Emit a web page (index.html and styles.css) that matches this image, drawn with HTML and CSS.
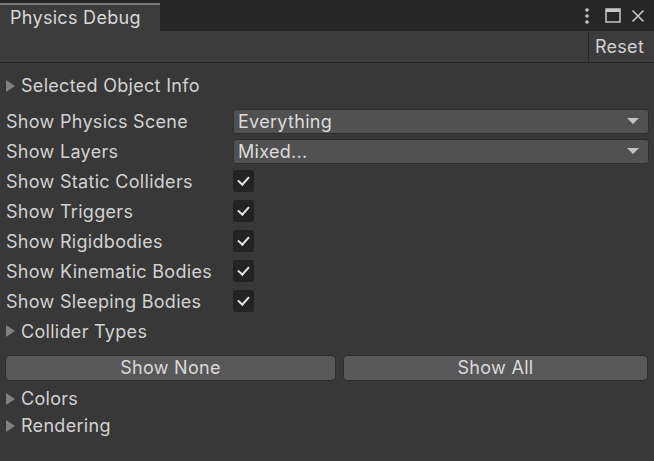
FILE: index.html
```html
<!DOCTYPE html>
<html>
<head>
<meta charset="utf-8">
<link rel="stylesheet" href="styles.css">
</head>
<body>
<div class="window">
  <div class="tabbar">
    <div class="tab">Physics Debug</div>
    <div class="tab-icons">
      <svg class="ic" width="8" height="18" viewBox="0 0 8 18"><circle cx="4" cy="3" r="1.8" fill="#c8c8c8"/><circle cx="4" cy="9" r="1.8" fill="#c8c8c8"/><circle cx="4" cy="15" r="1.8" fill="#c8c8c8"/></svg>
      <svg class="ic" width="16" height="15" viewBox="0 0 16 15"><rect x="1" y="1" width="14" height="13" fill="none" stroke="#c8c8c8" stroke-width="1.5"/><rect x="1" y="1" width="14" height="3" fill="#c8c8c8"/></svg>
      <svg class="ic" width="14" height="14" viewBox="0 0 14 14"><path d="M1.5 1.5L12.5 12.5M12.5 1.5L1.5 12.5" stroke="#c8c8c8" stroke-width="1.6"/></svg>
    </div>
  </div>
  <div class="toolbar">
    <div class="toolbar-btn">Reset</div>
  </div>
  <div class="content">
    <div class="foldout first"><span class="arrow"></span>Selected Object Info</div>
    <div class="field"><span class="label">Show Physics Scene</span><div class="popup">Everything<span class="caret"></span></div></div>
    <div class="field"><span class="label">Show Layers</span><div class="popup">Mixed...<span class="caret"></span></div></div>
    <div class="field"><span class="label">Show Static Colliders</span><span class="check"></span></div>
    <div class="field"><span class="label">Show Triggers</span><span class="check"></span></div>
    <div class="field"><span class="label">Show Rigidbodies</span><span class="check"></span></div>
    <div class="field"><span class="label">Show Kinematic Bodies</span><span class="check"></span></div>
    <div class="field"><span class="label">Show Sleeping Bodies</span><span class="check"></span></div>
    <div class="foldout types"><span class="arrow"></span>Collider Types</div>
    <div class="btnrow"><div class="btn">Show None</div><div class="btn">Show All</div></div>
    <div class="foldout"><span class="arrow"></span>Colors</div>
    <div class="foldout"><span class="arrow"></span>Rendering</div>
  </div>
</div>
</body>
</html>
```
FILE: styles.css
```css
html, body {
  margin: 0;
  padding: 0;
  background: #383838;
}
body {
  font-family: Inter, "Noto Sans", sans-serif;
  font-size: 18px;
  letter-spacing: 0.3px;
  color: #d2d2d2;
  width: 654px;
  height: 461px;
  overflow: hidden;
}
.tabbar {
  height: 31px;
  background: #262626;
  display: flex;
  align-items: flex-end;
  justify-content: space-between;
}
.tab {
  width: 150px;
  height: 26px;
  background: #3c3c3c;
  border-top: 2px solid #7a7a7a;
  padding-left: 10px;
  line-height: 25px;
  color: #d8d8d8;
}
.tab-icons {
  display: flex;
  align-items: center;
  height: 31px;
  padding-right: 9px;
}
.ic { display: block; }
.ic + .ic { margin-left: 10px; }
.ic:first-child { margin-right: 4px; }
.toolbar {
  height: 31px;
  background: #3c3c3c;
  border-bottom: 1px solid #262626;
  display: flex;
  justify-content: flex-end;
}
.toolbar-btn {
  border-left: 1px solid #2a2a2a;
  width: 61px;
  padding-right: 4px;
  text-align: center;
  line-height: 31px;
  color: #d2d2d2;
}
.content {
  padding: 0 6px 0 6px;
}
.foldout {
  display: flex;
  align-items: center;
  height: 27px;
}
.foldout.first {
  margin-top: 9px;
  margin-bottom: 7px;
}
.foldout.types {
  height: 30px;
}
.arrow {
  width: 0;
  height: 0;
  border-left: 9px solid #808080;
  border-top: 6px solid transparent;
  border-bottom: 6px solid transparent;
  margin-right: 6px;
  margin-left: 0;
}
.field {
  display: flex;
  align-items: center;
  height: 30px;
}
.label {
  width: 227px;
  flex: none;
}
.popup {
  flex: 1;
  height: 23px;
  background: #515151;
  border: 1px solid #2e2e2e;
  border-radius: 3px;
  margin-right: -1px;
  padding-left: 4px;
  display: flex;
  align-items: center;
  justify-content: space-between;
  color: #dcdcdc;
}
.caret {
  width: 0;
  height: 0;
  border-top: 6px solid #c4c4c4;
  border-left: 6px solid transparent;
  border-right: 6px solid transparent;
  margin-right: 9px;
}
.check {
  width: 21px;
  height: 22px;
  background: #232323;
  border-radius: 3px;
  position: relative;
}
.check::after {
  content: "";
  position: absolute;
  width: 9px;
  height: 5px;
  border-left: 2px solid #e4e4e4;
  border-bottom: 2px solid #e4e4e4;
  transform: rotate(-48deg);
  top: 6px;
  left: 5px;
}
.btnrow {
  display: flex;
  gap: 7px;
  margin: 9px 0 4px -1px;
}
.btn {
  height: 24px;
  line-height: 24px;
  background: #585858;
  border: 1px solid #2d2d2d;
  border-radius: 4px;
  text-align: center;
  color: #dadada;
}
.btn:first-child { width: 329px; }
.btn:last-child { width: 303px; }
```
